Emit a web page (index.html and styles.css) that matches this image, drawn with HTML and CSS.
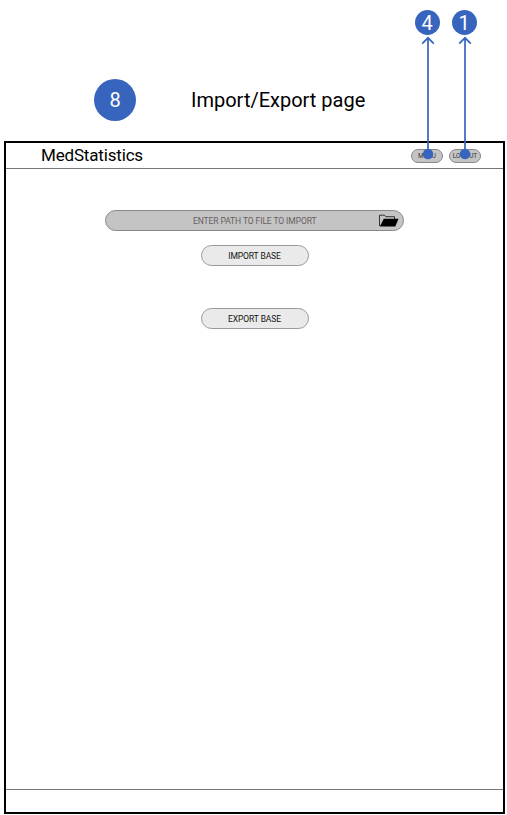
FILE: index.html
```html
<!DOCTYPE html>
<html lang="en">
<head>
<meta charset="utf-8">
<title>MedStatistics</title>
<link rel="stylesheet" href="styles.css">
</head>
<body>
<header class="caption">
  <span class="number">8</span>
  <h1 class="caption-title">Import/Export page</h1>
</header>
<main class="frame">
  <div class="topbar">
    <span class="brand">MedStatistics</span>
    <nav class="nav">
      <button class="chip">MENU</button>
      <button class="chip">LOGOUT</button>
    </nav>
  </div>
  <section class="content">
    <div class="path-field">
      <span class="path-text">ENTER PATH TO FILE TO IMPORT</span>
      <svg class="folder" width="20" height="13" viewBox="0 0 20 13">
        <path d="M.5 12V1.2H5.6L6.8 2.7H15.5V5" fill="none" stroke="#222" stroke-width=".9"/>
        <path d="M.8 12.5L4.8 4.8H19.5L16.3 12.5Z" fill="#000"/>
      </svg>
    </div>
    <button class="action">IMPORT BASE</button>
    <button class="action action-export">EXPORT BASE</button>
  </section>
  <footer class="footer"></footer>
</main>
<div class="link link-menu">
  <span class="badge">4</span>
  <svg class="arrow" width="16" height="124" viewBox="0 0 16 124">
    <path d="M8 2V118M2.2 7.6L8 1.8L13.8 7.6"/>
    <circle cx="8" cy="118" r="5.2"/>
  </svg>
</div>
<div class="link link-logout">
  <span class="badge">1</span>
  <svg class="arrow" width="16" height="124" viewBox="0 0 16 124">
    <path d="M8 2V118M2.2 7.6L8 1.8L13.8 7.6"/>
    <circle cx="8" cy="118" r="5.2"/>
  </svg>
</div>
</body>
</html>
```
FILE: styles.css
```css
* { box-sizing: border-box; }
body {
  margin: 0;
  height: 815px;
  padding: 78px 2px 1px 4px;
  background: #fff;
  color: #000;
  font-family: Roboto, sans-serif;
  overflow: hidden;
}
button { font: inherit; padding: 0; }
.caption {
  display: flex;
  align-items: center;
  height: 63px;
  padding: 0 0 20px 90px;
}
.number {
  width: 42px;
  height: 42px;
  border-radius: 50%;
  background: #3765bd;
  color: #fff;
  font-size: 20px;
  line-height: 43px;
  text-align: center;
}
.caption-title {
  margin: 1px 0 0 55px;
  font-size: 20px;
  font-weight: 400;
  line-height: 24px;
  white-space: nowrap;
}
.frame {
  display: flex;
  flex-direction: column;
  width: 501px;
  height: 673px;
  border: 2px solid #000;
}
.topbar {
  display: flex;
  align-items: center;
  justify-content: space-between;
  height: 26px;
  padding: 0 22px 0 35px;
  border-bottom: 1px solid #777;
}
.brand {
  margin-bottom: 2px;
  font-size: 17px;
  line-height: 20px;
  letter-spacing: -.17px;
}
.nav { display: flex; gap: 6px; }
.chip {
  width: 32px;
  height: 14px;
  border: 1px solid #888;
  border-radius: 7px;
  background: #c4c4c4;
  color: #333;
  font-size: 6.4px;
  line-height: 12px;
}
.content {
  display: flex;
  flex: 1;
  flex-direction: column;
  align-items: center;
  padding-top: 41px;
}
.path-field {
  display: flex;
  align-items: center;
  width: 299px;
  height: 21px;
  padding: 0 4px 0 87px;
  border: 1px solid #888;
  border-radius: 11px;
  background: #c4c4c4;
  color: #695e61;
  font-size: 8.5px;
}
.path-text { white-space: nowrap; letter-spacing: -.09px; }
.folder { margin-left: auto; }
.action {
  width: 108px;
  height: 21px;
  margin-top: 14px;
  border: 1px solid #999;
  border-radius: 11px;
  background: #eaeaea;
  color: #111;
  font-size: 8.5px;
  line-height: 20px;
  letter-spacing: -.09px;
}
.action-export { margin-top: 42px; }
.footer { height: 23px; border-top: 1px solid #777; }
.link {
  position: absolute;
  top: 10px;
  display: flex;
  flex-direction: column;
  align-items: center;
  width: 26px;
}
.link-menu { left: 414px; }
.link-logout { left: 451px; }
.badge {
  width: 25px;
  height: 25px;
  border-radius: 50%;
  background: #3765bd;
  color: #fff;
  font-size: 20px;
  line-height: 26px;
  text-align: center;
}
.arrow { margin: 1px 0 0 1px; }
.arrow path { fill: none; stroke: #3765bd; stroke-width: 1.7; }
.arrow circle { fill: #3765bd; }
```
